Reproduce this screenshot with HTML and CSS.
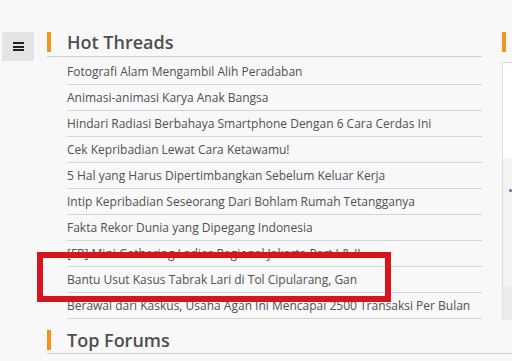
FILE: index.html
```html
<!DOCTYPE html>
<html>
<head>
<meta charset="utf-8">
<link rel="stylesheet" href="styles.css">
</head>
<body>
<div class="page">
  <div class="top">
    <button class="menu" aria-label="menu"><span class="bar"></span><span class="bar"></span><span class="bar"></span></button>
    <section class="hot">
      <h2 class="head"><span class="mark"></span><span class="title">Hot Threads</span></h2>
      <ul class="list">
        <li>Fotografi Alam Mengambil Alih Peradaban</li>
        <li>Animasi-animasi Karya Anak Bangsa</li>
        <li>Hindari Radiasi Berbahaya Smartphone Dengan 6 Cara Cerdas Ini</li>
        <li>Cek Kepribadian Lewat Cara Ketawamu!</li>
        <li>5 Hal yang Harus Dipertimbangkan Sebelum Keluar Kerja</li>
        <li>Intip Kepribadian Seseorang Dari Bohlam Rumah Tetangganya</li>
        <li>Fakta Rekor Dunia yang Dipegang Indonesia</li>
        <li>[FR] Mini Gathering Ladies Regional Jakarta Part I &amp; II</li>
        <li>Bantu Usut Kasus Tabrak Lari di Tol Cipularang, Gan</li>
        <li>Berawal dari Kaskus, Usaha Agan Ini Mencapai 2500 Transaksi Per Bulan</li>
      </ul>
      <div class="highlight"></div>
    </section>
    <aside class="side">
      <span class="mark"></span>
      <div class="box">
        <div class="box-white"></div>
        <div class="box-band"><span class="dot"></span></div>
        <div class="box-foot"></div>
      </div>
    </aside>
  </div>
  <section class="forums">
    <h2 class="head"><span class="mark"></span><span class="title">Top Forums</span></h2>
  </section>
</div>
</body>
</html>
```

FILE: styles.css
```css
* { box-sizing: border-box; }
html, body { margin: 0; padding: 0; }
body {
  background: #f8f8f8;
  font-family: "Open Sans", "Liberation Sans", sans-serif;
  width: 512px;
  height: 361px;
  overflow: hidden;
}
.page { padding-top: 32px; }
.top { display: flex; align-items: flex-start; }
.menu {
  margin: 0 13px 0 2px;
  width: 32px;
  height: 29px;
  border: 0;
  padding: 0;
  background: #e4e4e4;
  display: flex;
  flex-direction: column;
  align-items: center;
  justify-content: center;
  gap: 1.5px;
  flex: none;
}
.menu .bar { display: block; width: 11px; height: 2px; background: #222; }
.hot { width: 435px; flex: none; position: relative; }
.head {
  margin: 0;
  height: 25px;
  display: flex;
  align-items: flex-start;
  gap: 16px;
  border-bottom: 1px solid #cfcfcf;
  font-size: 18px;
  font-weight: 600;
  color: #4e4e4e;
}
.mark { display: block; width: 4px; height: 20px; background: #f1961d; flex: none; }
.title { line-height: 20px; }
.list { list-style: none; margin: 2px 0 0 20px; padding: 0; }
.list li {
  height: 26px;
  line-height: 25px;
  border-bottom: 1px solid #d4d4d4;
  font-size: 12px;
  color: #505050;
  white-space: nowrap;
}
.highlight {
  position: absolute;
  left: -10px;
  top: 220px;
  width: 354px;
  height: 50px;
  border: 6px solid #d8141d;
}
.side { margin-left: 20px; flex: 1; display: flex; flex-direction: column; }
.box {
  margin-top: 10px;
  height: 258px;
  border-top: 1px solid #dedede;
  border-left: 1px solid #dedede;
  display: flex;
  flex-direction: column;
}
.box-white { height: 95px; background: #fff; }
.box-band { height: 129px; background: #f3f3f3; padding: 31px 0 0 6px; }
.box-foot { flex: 1; background: #ececec; }
.dot { display: block; width: 3px; height: 3px; border-radius: 50%; background: #3d7bb8; }
.forums { margin: 10px 0 0 47px; }
.forums .head { height: 24px; }
```
